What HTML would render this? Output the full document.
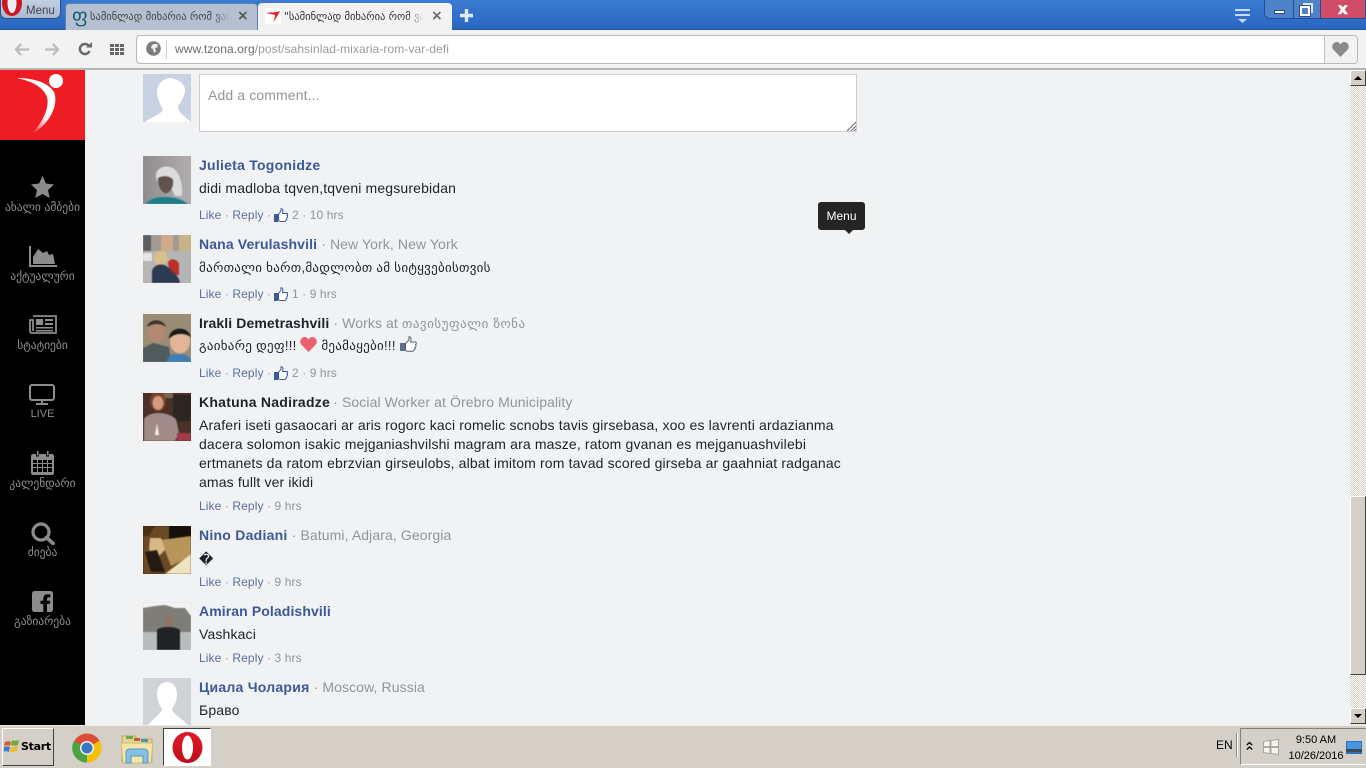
<!DOCTYPE html>
<html><head><meta charset="utf-8"><title>tzona</title>
<style>
html,body{margin:0;padding:0;width:1366px;height:768px;overflow:hidden;background:#f1f2f4;font-family:"Liberation Sans",sans-serif}
div,span,svg{box-sizing:border-box}
.a{position:absolute;white-space:nowrap}
.av{position:absolute;left:143px;width:48px;height:48px;overflow:hidden}
.av.p svg{filter:blur(.6px)}
.n{position:absolute;left:199px;font:bold 14px/18px "Liberation Sans","DejaVu Sans",sans-serif;color:#3b5998;letter-spacing:.25px;white-space:nowrap}
.n.d{color:#1d2129}
.n i{font:normal 14px/18px "Liberation Sans","DejaVu Sans",sans-serif;color:#90949c;letter-spacing:.1px}
.n i b{font:normal 13px/18px "DejaVu Sans",sans-serif;letter-spacing:.5px}
.t{position:absolute;left:199px;font:14px/19px "Liberation Sans","DejaVu Sans",sans-serif;color:#1d2129;white-space:nowrap;letter-spacing:.15px}
.g{font:13px/19px "Liberation Sans","DejaVu Sans",sans-serif;letter-spacing:.28px}
.m{position:absolute;left:199px;font:12px/16px "Liberation Sans",sans-serif;color:#90949c;white-space:nowrap;letter-spacing:.1px}
.m u{text-decoration:none;color:#5a6f9f}
.m svg{vertical-align:-3px;margin:0 1px 0 -1px}
.sl{position:absolute;left:0;width:85px;text-align:center;color:#8f8f8f;font:11.5px/12px "DejaVu Sans",sans-serif;white-space:nowrap}
.tab{position:absolute;top:3px;height:27px}
.gt{font:10.5px/14px "DejaVu Sans",sans-serif;color:#444;overflow:hidden;white-space:nowrap;position:absolute;-webkit-mask-image:linear-gradient(90deg,#000 88%,transparent);mask-image:linear-gradient(90deg,#000 88%,transparent)}
</style></head><body>

<!-- browser title bar -->
<div class="a" style="left:0;top:0;width:1366px;height:30px;background:linear-gradient(#3a7bd2,#2a66c0);border-bottom:1px solid #1f56a6"></div>
<div class="a" style="left:0;top:-3px;width:61px;height:22px;background:linear-gradient(#c6d3e6,#a9b9d2);border:1px solid #2b4f86;border-radius:0 0 6px 6px"></div>
<svg class="a" style="left:1px;top:0" width="23" height="17" viewBox="0 0 23 17"><ellipse cx="11" cy="3" rx="10" ry="13" fill="#cf1420"/><ellipse cx="11" cy="3" rx="4.500" ry="10" fill="#e9eef6"/></svg>
<div class="a" style="left:26px;top:4px;font:11.500px/14px 'Liberation Sans',sans-serif;color:#444">Menu</div>

<div class="tab a" style="left:65px;width:193px;background:#b4c0d2;border-radius:4px 4px 0 0;border:1px solid #5c7fb0;border-bottom:0"></div>
<div class="a" style="left:72px;top:6px;font:19px/20px 'DejaVu Sans',sans-serif;color:#175a6e">ფ</div>
<div class="gt" style="left:90px;top:10px;width:140px">სამინლად მიხარია რომ ვარ</div>
<div class="a" style="left:237px;top:9px;font:bold 14px/14px 'DejaVu Sans',sans-serif;color:#555">×</div>

<div class="tab a" style="left:258px;width:194px;background:#f2f2f2;border-radius:4px 4px 0 0"></div>
<svg class="a" style="left:265px;top:8px" width="16" height="16" viewBox="0 0 16 16"><rect width="16" height="16" fill="#fff"/><path d="M1 5C6 4 10 5 15 3 13 7 11 11 8 14 10 10 10 8 10 7 7 6 4 6 1 5Z" fill="#e8222c"/></svg>
<div class="gt" style="left:284px;top:10px;width:140px;color:#333">"სამინლად მიხარია რომ ვარ</div>
<div class="a" style="left:431px;top:9px;font:bold 14px/14px 'DejaVu Sans',sans-serif;color:#666">×</div>
<svg class="a" style="left:460px;top:9px" width="13" height="13"><path d="M6.500 0V13M0 6.500H13" stroke="#dfe9f7" stroke-width="3.400"/></svg>

<svg class="a" style="left:1235px;top:9px" width="15" height="14"><path d="M0 1H15M0 6H15" stroke="#c8dcf5" stroke-width="2"/><path d="M3 10H12L7.500 14Z" fill="#c8dcf5"/></svg>
<div class="a" style="left:1264px;top:-2px;width:102px;height:21px;border:1px solid #1f4f98;border-radius:0 0 0 6px;background:#4f82c9;overflow:hidden">
 <div class="a" style="left:28px;top:0;width:1px;height:21px;background:#1f4f98"></div>
 <div class="a" style="left:55px;top:0;width:1px;height:21px;background:#1f4f98"></div>
 <div class="a" style="left:56px;top:0;width:46px;height:21px;background:#cf4b68"></div>
 <div class="a" style="left:9px;top:11px;width:11px;height:4px;background:#fff;border:1px solid #274a7a"></div>
 <div class="a" style="left:38px;top:4px;width:10px;height:10px;border:2px solid #dbe6f5"></div>
 <div class="a" style="left:35px;top:7px;width:10px;height:10px;border:2px solid #fff;background:#4f82c9;outline:1px solid #2a5290"></div>
 <div class="a" style="left:73px;top:2px;font:bold 15px/17px 'DejaVu Sans',sans-serif;color:#fff;-webkit-text-stroke:.6px #fff">x</div>
</div>

<!-- toolbar -->
<div class="a" style="left:0;top:30px;width:1366px;height:40px;background:#f2f2f2;border-bottom:2px solid #b4b4b4"></div>
<svg class="a" style="left:14px;top:43px" width="15" height="13"><path d="M7 1L2 6.500 7 12M2 6.500H15" fill="none" stroke="#bcbcbc" stroke-width="2.300"/></svg>
<svg class="a" style="left:45px;top:43px" width="15" height="13"><path d="M8 1L13 6.500 8 12M13 6.500H0" fill="none" stroke="#bcbcbc" stroke-width="2.300"/></svg>
<svg class="a" style="left:78px;top:42px" width="14" height="14" viewBox="0 0 14 14"><path d="M11.500 9A5 5 0 1 1 10.500 3.500" fill="none" stroke="#6a6a6a" stroke-width="2.500"/><path d="M8 5.500H14V0Z" fill="#6a6a6a"/></svg>
<svg class="a" style="left:110px;top:44px" width="14" height="11" fill="#666"><rect width="4" height="3"/><rect x="5" width="4" height="3"/><rect x="10" width="4" height="3"/><rect y="4" width="4" height="3"/><rect x="5" y="4" width="4" height="3"/><rect x="10" y="4" width="4" height="3"/><rect y="8" width="4" height="3"/><rect x="5" y="8" width="4" height="3"/><rect x="10" y="8" width="4" height="3"/></svg>
<div class="a" style="left:136px;top:35px;width:1222px;height:29px;background:#fff;border:1px solid #b8b8b8;border-radius:4px"></div>
<div class="a" style="left:1324px;top:36px;width:33px;height:27px;background:#f2f2f2;border-left:1px solid #c4c4c4;border-radius:0 3px 3px 0"></div>
<svg class="a" style="left:146px;top:41px" width="15" height="15" viewBox="0 0 15 15"><circle cx="7.500" cy="7.500" r="7.300" fill="#7d7d7d"/><path d="M8 3L11 3 12 6 9 7 10 10 8 12 7 8 5 7 6 4Z" fill="#f0f0f0"/></svg>
<div class="a" style="left:166px;top:40px;width:1px;height:19px;background:#cfcfcf"></div>
<div class="a" style="left:175px;top:41px;font:12px/16px 'Liberation Sans',sans-serif;color:#9a9a9a;letter-spacing:.08px"><span style="color:#6a6a6a">www.tzona.org</span>/post/sahsinlad-mixaria-rom-var-defi</div>
<svg class="a" style="left:1332px;top:42px" width="17" height="15" viewBox="0 0 17 15"><path d="M8.500 15L1.200 7.500C-1.500 3.500 2 0 4.500 0 6.500 0 7.800 1 8.500 2.500 9.200 1 10.500 0 12.500 0 15 0 18.500 3.500 15.800 7.500Z" fill="#8a8a8a"/></svg>

<!-- sidebar -->
<div class="a" style="left:0;top:70px;width:85px;height:655px;background:#000"></div>
<div class="a" style="left:0;top:70px;width:85px;height:70px;background:#ee1c25"></div>
<svg class="a" style="left:0;top:70px" width="85" height="70" viewBox="0 0 85 70"><defs><linearGradient id="sw" x1=".3" y1="1" x2=".6" y2=".35"><stop offset="0" stop-color="#fff" stop-opacity="0"/><stop offset=".6" stop-color="#f2f2f2"/><stop offset="1" stop-color="#fff"/></linearGradient></defs><circle cx="56" cy="11" r="7" fill="#fff"/><path d="M17 8C32 8 48 12 54 22 59 34 50 54 33 63 42 52 50 38 47 27 43 16 30 11 17 8Z" fill="url(#sw)"/></svg>

<svg class="a" style="left:31px;top:176px" width="23" height="22" viewBox="0 0 23 22"><path d="M11.500 0L15 7.500 23 8.500 17 14 18.700 22 11.500 18 4.300 22 6 14 0 8.500 8 7.500Z" fill="#8c8c8c"/></svg>
<div class="sl" style="top:201px">ახალი ამბები</div>
<svg class="a" style="left:29px;top:246px" width="28" height="21" viewBox="0 0 28 21"><path d="M1 0V20H28" fill="none" stroke="#8c8c8c" stroke-width="2"/><path d="M4 18V11L9 3 14 7 18 5 20 9 24 8 26 18Z" fill="#8c8c8c"/></svg>
<div class="sl" style="top:270px">აქტუალური</div>
<svg class="a" style="left:29px;top:315px" width="28" height="19" viewBox="0 0 28 19"><path d="M4 1H27V18H3C1.500 18 1 17 1 16V5H4V16" fill="none" stroke="#8c8c8c" stroke-width="1.800"/><path d="M7 4H14V10H7ZM16 4H24V6H16ZM16 8H24V10H16ZM7 12H24V13.500H7ZM7 15H24V16.500H7Z" fill="#8c8c8c"/></svg>
<div class="sl" style="top:339px">სტატიები</div>
<svg class="a" style="left:29px;top:384px" width="26" height="21" viewBox="0 0 26 21"><rect x="1" y="1" width="24" height="15" rx="2" fill="none" stroke="#8c8c8c" stroke-width="2"/><path d="M12 16H14V19H19V21H7V19H12Z" fill="#8c8c8c"/></svg>
<div class="sl" style="top:408px;font:11px/12px 'Liberation Sans',sans-serif">LIVE</div>
<svg class="a" style="left:31px;top:451px" width="23" height="24" viewBox="0 0 23 24"><path fill="#8c8c8c" fill-rule="evenodd" d="M2 3H5V5.500H8V3H15V5.500H18V3H21C22 3 23 4 23 5V22C23 23 22 24 21 24H2C1 24 0 23 0 22V5C0 4 1 3 2 3ZM2 9V12H6V9ZM7 9V12H11V9ZM12 9V12H16V9ZM17 9V12H21V9ZM2 13V16H6V13ZM7 13V16H11V13ZM12 13V16H16V13ZM17 13V16H21V13ZM2 17V21H6V17ZM7 17V21H11V17ZM12 17V21H16V17ZM17 17V21H21V17Z"/><rect x="6" y="0" width="1.500" height="4.500" fill="#8c8c8c"/><rect x="16" y="0" width="1.500" height="4.500" fill="#8c8c8c"/></svg>
<div class="sl" style="top:477px">კალენდარი</div>
<svg class="a" style="left:31px;top:522px" width="24" height="23" viewBox="0 0 24 23"><circle cx="10" cy="10" r="8" fill="none" stroke="#8c8c8c" stroke-width="3.200"/><path d="M15.500 15.500L22 21.500" stroke="#8c8c8c" stroke-width="3.600" stroke-linecap="round"/></svg>
<div class="sl" style="top:546px">ძიება</div>
<svg class="a" style="left:32px;top:591px" width="21" height="21" viewBox="0 0 21 21"><path fill="#8c8c8c" d="M3 0H18C20 0 21 1 21 3V18C21 20 20 21 18 21H15V13H17.800L18.300 9.800H15V8C15 7 15.500 6.400 16.500 6.400H18.400V3.500C17.500 3.400 16.500 3.300 15.600 3.300 13 3.300 11.300 5 11.300 7.600V9.800H8.500V13H11.300V21H3C1 21 0 20 0 18V3C0 1 1 0 3 0Z"/></svg>
<div class="sl" style="top:615px">გაზიარება</div>

<!-- comment box -->
<div class="av" style="top:74px;background:#c9d2e3"><svg width="48" height="48" viewBox="0 0 48 48"><path fill="#fff" d="M28 4C34 5 42 9 42 16 42 22 38 28 35 32 34 36 40 42 47 47V48H2C8 43 17 41 20 36 17 30 14 24 14 17 15 9 21 4 28 4Z"/></svg></div>
<div class="a" style="left:199px;top:74px;width:658px;height:58px;background:#fff;border:1px solid #ccd0d5"></div>
<div class="a" style="left:208px;top:86px;font:14px/18px 'Liberation Sans',sans-serif;color:#90949c;letter-spacing:.12px">Add a comment...</div>
<svg class="a" style="left:847px;top:122px" width="9" height="9"><path d="M0 9L9 0M4 9L9 4M7 9L9 7" stroke="#666" stroke-width="1"/></svg>

<!-- comments -->
<div class="av p" style="top:156px;background:#a5a2a5"><svg width="48" height="48" viewBox="0 0 48 48"><defs><linearGradient id="j" x1="0" y1="0" x2="1" y2="0"><stop offset="0" stop-color="#8f8c8d"/><stop offset="1" stop-color="#b2aeb0"/></linearGradient></defs><rect width="48" height="48" fill="url(#j)"/><path d="M13 22C12 13 20 9 27 11 35 13 40 24 39 40H32L28 32H18Z" fill="#dcdcdc"/><path d="M15 22C20 19 28 20 30 24 31 32 26 38 22 37 18 36 15 30 15 22Z" fill="#62524c"/><path d="M3 48C6 43 14 41 20 41 28 41 38 42 45 48Z" fill="#1c7e88"/></svg></div>
<div class="n" style="top:156px">Julieta Togonidze</div>
<div class="t" style="top:179px">didi madloba tqven,tqveni megsurebidan</div>
<div class="m" style="top:207px"><u>Like</u> · <u>Reply</u> · <svg width="14" height="14" viewBox="0 0 14 14"><path d="M4.500 6.500L7 3V.8C8.500.5 9.500 2 8.500 5.500H13C14 5.500 14 7 13 7.500 14 8.500 13.500 9.500 12.800 10 13 11 12.500 12 12 12 12 13.500 11 13.500 10 13.500H6L4.500 12.500Z" fill="#fff" stroke="#3b5998" stroke-width="1"/><rect x="0" y="6" width="4" height="8" fill="#3b5998"/></svg> 2 · 10 hrs</div>

<div class="av p" style="top:235px;background:#b8b0a6"><svg width="48" height="48" viewBox="0 0 48 48"><rect width="48" height="16" fill="#a39a94"/><rect x="18" y="0" width="12" height="20" fill="#cfa98c"/><rect x="36" width="12" height="22" fill="#c9b48a"/><rect y="0" width="8" height="16" fill="#5d6062"/><rect y="16" width="48" height="32" fill="#b5b5b6"/><rect y="18" width="9" height="8" fill="#e6e6e6"/><path d="M25 28C26 23 34 23 36 29L36 40 27 40Z" fill="#bb2e2a"/><circle cx="18" cy="23" r="7" fill="#d7c08a"/><path d="M9 48V36C11 29 20 27 26 33 31 38 36 41 37 48Z" fill="#2c3a52"/></svg></div>
<div class="n" style="top:235px;letter-spacing:.13px">Nana Verulashvili <i>· New York, New York</i></div>
<div class="t g" style="top:258px">მართალი ხართ,მადლობთ ამ სიტყვებისთვის</div>
<div class="m" style="top:286px"><u>Like</u> · <u>Reply</u> · <svg width="14" height="14" viewBox="0 0 14 14"><path d="M4.500 6.500L7 3V.8C8.500.5 9.500 2 8.500 5.500H13C14 5.500 14 7 13 7.500 14 8.500 13.500 9.500 12.800 10 13 11 12.500 12 12 12 12 13.500 11 13.500 10 13.500H6L4.500 12.500Z" fill="#fff" stroke="#3b5998" stroke-width="1"/><rect x="0" y="6" width="4" height="8" fill="#3b5998"/></svg> 1 · 9 hrs</div>

<div class="av p" style="top:314px;background:#9a8f78"><svg width="48" height="48" viewBox="0 0 48 48"><rect width="48" height="48" fill="#9a8d74"/><path d="M0 48V34L10 29 26 33 28 48Z" fill="#4f5b5c"/><ellipse cx="13" cy="17" rx="9" ry="12" fill="#b28a72"/><path d="M4 13C6 4 20 4 23 13 18 9 10 9 4 13Z" fill="#3b3230"/><path d="M24 48C24 42 28 40 36 40 44 40 48 43 48 48Z" fill="#3f7fb4"/><ellipse cx="37" cy="27" rx="10" ry="12.500" fill="#e0b598"/><path d="M26 25C26 12 45 11 48 23 42 19 32 18 26 25Z" fill="#1d1a1c"/></svg></div>
<div class="n d" style="top:314px;letter-spacing:.1px">Irakli Demetrashvili <i>· Works at <b>თავისუფალი ზონა</b></i></div>
<div class="t g" style="top:336px">გაიხარე დეფ!!! <svg width="17" height="15" viewBox="0 0 17 15" style="vertical-align:-2px"><path d="M8.500 15L1.200 7.500C-1.500 3.500 2 0 4.500 0 6.500 0 7.800 1 8.500 2.500 9.200 1 10.500 0 12.500 0 15 0 18.500 3.500 15.800 7.500Z" fill="#ec5f73"/></svg> მეამაყები!!! <svg width="17" height="16" viewBox="0 0 17 16" style="vertical-align:-2px"><rect x="0" y="7" width="5" height="8" fill="#5e6f8c"/><path d="M5.500 7.500L9 4V.8C11 .5 11.500 3 10.500 6H15.500C16.500 6 16.500 8 15.500 8.500 16.500 9.500 16 11 15 11.500 15.300 12.500 15 13.500 14 13.800 14 15 13 15.300 12 15.300H7L5.500 14.500Z" fill="#fff" stroke="#50607c" stroke-width="1"/></svg></div>
<div class="m" style="top:365px"><u>Like</u> · <u>Reply</u> · <svg width="14" height="14" viewBox="0 0 14 14"><path d="M4.500 6.500L7 3V.8C8.500.5 9.500 2 8.500 5.500H13C14 5.500 14 7 13 7.500 14 8.500 13.500 9.500 12.800 10 13 11 12.500 12 12 12 12 13.500 11 13.500 10 13.500H6L4.500 12.500Z" fill="#fff" stroke="#3b5998" stroke-width="1"/><rect x="0" y="6" width="4" height="8" fill="#3b5998"/></svg> 2 · 9 hrs</div>

<div class="av p" style="top:393px;background:#4a2f25"><svg width="48" height="48" viewBox="0 0 48 48"><rect width="48" height="48" fill="#4a3027"/><rect x="30" y="2" width="18" height="26" fill="#2c2620"/><rect x="14" width="16" height="5" fill="#7a6a55"/><ellipse cx="15" cy="8" rx="8" ry="10" fill="#7a4530"/><ellipse cx="15" cy="10" rx="5.500" ry="7" fill="#d29a80"/><path d="M1 48V26C6 18 24 18 33 26L36 40 32 48Z" fill="#a08b88"/><path d="M12 42L14 30 16 42Z" fill="#fbf3e0"/><rect x="34" y="40" width="14" height="8" fill="#a33c46"/></svg></div>
<div class="n d" style="top:393px">Khatuna Nadiradze <i style="margin-left:-1px">· Social Worker at Örebro Municipality</i></div>
<div class="t" style="top:416px">Araferi iseti gasaocari ar aris rogorc kaci romelic scnobs tavis girsebasa, xoo es lavrenti ardazianma<br>dacera solomon isakic mejganiashvilshi magram ara masze, ratom gvanan es mejganuashvilebi<br>ertmanets da ratom ebrzvian girseulobs, albat imitom rom tavad scored girseba ar gaahniat radganac<br>amas fullt ver ikidi</div>
<div class="m" style="top:498px"><u>Like</u> · <u>Reply</u> · 9 hrs</div>

<div class="av p" style="top:526px;background:#2e1c10"><svg width="48" height="48" viewBox="0 0 48 48"><rect width="48" height="48" fill="#6a4a24"/><rect x="26" width="22" height="14" fill="#170f08"/><path d="M18 14L48 10V30L28 40Z" fill="#b8965a"/><path d="M22 48L48 28V48Z" fill="#f0e3bf"/><path d="M7 12L18 12 22 24 16 30 6 24Z" fill="#d8b888"/><path d="M2 26L14 24 22 46 8 46Z" fill="#241a12"/><path d="M0 0H12L6 10H0Z" fill="#4a2f12"/></svg></div>
<div class="n" style="top:526px">Nino Dadiani <i>· Batumi, Adjara, Georgia</i></div>
<div class="t" style="top:551px;font-family:'DejaVu Sans',sans-serif">�</div>
<div class="m" style="top:574px"><u>Like</u> · <u>Reply</u> · 9 hrs</div>

<div class="av p" style="top:602px;background:#c6c6c6"><svg width="48" height="48" viewBox="0 0 48 48"><rect width="48" height="48" fill="#f4f4f4"/><path d="M0 6L12 4 22 3 32 6 42 6 48 14V30H0Z" fill="#7f7d78"/><rect y="30" width="48" height="18" fill="#b9bbbd"/><path d="M14 48V28C17 24 32 24 37 28V48Z" fill="#202324"/><ellipse cx="26" cy="19" rx="4.500" ry="6" fill="#8e7566"/></svg></div>
<div class="n" style="top:602px;letter-spacing:.1px">Amiran Poladishvili</div>
<div class="t" style="top:625px">Vashkaci</div>
<div class="m" style="top:650px"><u>Like</u> · <u>Reply</u> · 3 hrs</div>

<div class="av" style="top:678px;background:#d0d3d8"><svg width="48" height="48" viewBox="0 0 48 48"><path fill="#fff" d="M24 4C30 4 34 9 34 16 34 23 31 28 29 31 29 35 38 40 46 48H4C10 41 19 35 19 31 17 28 14 23 14 16 14 9 18 4 24 4Z"/></svg></div>
<div class="n" style="top:678px">Циала Чолария <i>· Moscow, Russia</i></div>
<div class="t" style="top:701px">Браво</div>

<!-- tooltip -->
<div class="a" style="left:818px;top:202px;width:47px;height:28px;background:#252525;border-radius:3px;color:#fff;font:12px/28px 'Liberation Sans',sans-serif;text-align:center">Menu</div>
<div class="a" style="left:845px;top:230px;width:0;height:0;border:4px solid transparent;border-top-color:#252525;border-bottom:0"></div>

<!-- scrollbar -->
<div class="a" style="left:1350px;top:70px;width:16px;height:655px;background-color:#f4f4f2;background-image:repeating-conic-gradient(#d4d0c8 0 25%,#fff 0 50%);background-size:2px 2px"></div>
<div class="a" style="left:1350px;top:70px;width:16px;height:16px;background:#d4d0c8;border:1px solid;border-color:#fff #404040 #404040 #fff"></div>
<div class="a" style="left:1354px;top:76px;width:0;height:0;border:4px solid transparent;border-bottom:4px solid #000;border-top:0"></div>
<div class="a" style="left:1350px;top:496px;width:16px;height:179px;background:#d4d0c8;border:1px solid;border-color:#fff #404040 #404040 #fff"></div>
<div class="a" style="left:1350px;top:708px;width:16px;height:16px;background:#d4d0c8;border:1px solid;border-color:#fff #404040 #404040 #fff"></div>
<div class="a" style="left:1354px;top:714px;width:0;height:0;border:4px solid transparent;border-top:4px solid #000;border-bottom:0"></div>

<!-- taskbar -->
<div class="a" style="left:0;top:725px;width:1366px;height:43px;background:#d4d0c8;border-top:1px solid #ecebe6"></div>
<div class="a" style="left:2px;top:728px;width:52px;height:38px;background:#d4d0c8;border:1px solid;border-color:#fff #404040 #404040 #fff"></div>
<svg class="a" style="left:4px;top:739px" width="16" height="15" viewBox="0 0 16 15"><path d="M1 3C3 2 5 2 7 3L6 7C4 6 2 6 0 7Z" fill="#e2562a"/><path d="M8 1C10 2 12 2 15 1L14 6C12 7 9 7 7 6Z" fill="#74ab3a"/><path d="M0 8C2 7 4 7 6 8L5 13C3 12 1 12 0 13Z" fill="#3d7fc8"/><path d="M7 8C9 8 12 8 14 7L13 12C11 13 8 13 6 13Z" fill="#f0bb2c"/></svg>
<div class="a" style="left:21px;top:739px;font:bold 11px/16px 'DejaVu Sans','Liberation Sans',sans-serif;color:#000;letter-spacing:-.3px">Start</div>

<svg class="a" style="left:72px;top:733px" width="30" height="30" viewBox="0 0 30 30"><circle cx="15" cy="15" r="14.500" fill="#dd4b39"/><path d="M15 15L27.500 7.500A14.500 14.500 0 0 1 15 29.500Z" fill="#f4c20d"/><path d="M15 15L15 29.500A14.500 14.500 0 0 1 2 8Z" fill="#4ba345"/><circle cx="15" cy="15" r="7" fill="#f2f2f2"/><circle cx="15" cy="15" r="5.500" fill="#3a78c6"/></svg>
<svg class="a" style="left:121px;top:733px" width="32" height="32" viewBox="0 0 32 32"><path d="M1 3H14L16 6H31V28H1Z" fill="#e8d48c" stroke="#b8a868"/><rect x="5" y="3" width="7" height="3" fill="#6aa84f"/><rect x="13" y="5" width="6" height="3" fill="#c55a3a"/><rect x="20" y="6" width="7" height="3" fill="#4a90b8"/><path d="M0 10H32L30 30H2Z" fill="#f3e6a6" stroke="#c9b778"/><path d="M5 30V19C5 17 7 16 9 16H23C25 16 27 17 27 19V30H22V23H10V30Z" fill="#86c0e4" stroke="#5b96bd"/></svg>
<div class="a" style="left:163px;top:728px;width:48px;height:38px;background:#fff;border:1px solid;border-color:#404040 #fff #fff #404040"></div>
<svg class="a" style="left:172px;top:732px" width="31" height="31" viewBox="0 0 31 31"><defs><linearGradient id="op" x1="0" y1="0" x2="0" y2="1"><stop offset="0" stop-color="#e01a28"/><stop offset="1" stop-color="#bd0e1a"/></linearGradient></defs><ellipse cx="15.500" cy="15.500" rx="15" ry="15.500" fill="url(#op)"/><ellipse cx="15.500" cy="15.500" rx="5.500" ry="12" fill="#fff"/></svg>

<div class="a" style="left:1216px;top:738px;font:12px/14px 'Liberation Sans',sans-serif;color:#000">EN</div>
<div class="a" style="left:1236px;top:733px;width:2px;height:24px;background:#fff;border-left:1px solid #888"></div>
<div class="a" style="left:1240px;top:728px;width:126px;height:37px;border:1px solid;border-color:#808080 #d4d0c8 #fff #808080"></div>
<svg class="a" style="left:1246px;top:741px" width="7" height="10"><path d="M.8 4L3.500 1.500 6.200 4M.8 8.500L3.500 6 6.200 8.500" fill="none" stroke="#000" stroke-width="1.300"/></svg>
<svg class="a" style="left:1263px;top:739px" width="16" height="16" viewBox="0 0 16 16"><path d="M.5 2.500L7 1.500V7.500H.5ZM8 1.500L15.500 .5V7.500H8ZM.5 8.500H7V14.500L.5 13.500ZM8 8.500H15.500V15.500L8 14.500Z" fill="#f6f5f0" stroke="#9a9890" stroke-width=".8"/></svg>
<div class="a" style="left:1284px;top:733px;width:64px;text-align:center;font:11px/14px 'Liberation Sans',sans-serif;color:#000">9:50 AM</div>
<div class="a" style="left:1284px;top:749px;width:64px;text-align:center;font:11px/14px 'Liberation Sans',sans-serif;color:#000">10/26/2016</div>
<svg class="a" style="left:1346px;top:741px" width="16" height="13"><rect width="16" height="13" fill="#2b71c9"/><rect y="8" width="16" height="3" fill="#3a4a5a"/><rect x="1" y="1" width="14" height="7" fill="#4d94e0"/></svg>

</body></html>
